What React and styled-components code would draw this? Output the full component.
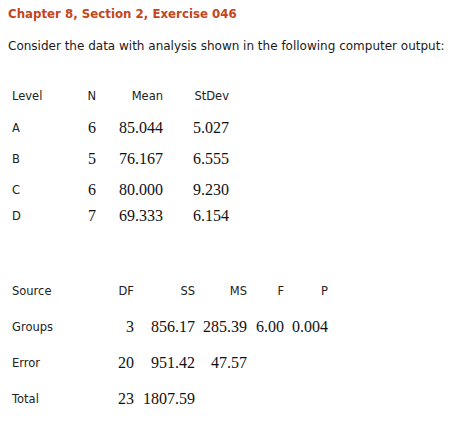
import React from "react";
import styled, { createGlobalStyle } from "styled-components";

const Global = createGlobalStyle`
  html, body { background: #ffffff; }
  body {
    margin: 8px;
    font-family: Verdana, "DejaVu Sans", sans-serif;
    font-size: 12px;
    color: #222;
  }
`;

const Page = styled.div`
  display: flex;
  flex-direction: column;
`;

const Title = styled.h2`
  margin: 0;
  font-size: 11.8px;
  line-height: 13px;
  font-weight: bold;
  color: #c4461c;
`;

const Intro = styled.p`
  margin: 17px 0 0;
  font-size: 12px;
  line-height: 16px;
  color: #1a1a1a;
`;

const Table = styled.div`
  display: grid;
  grid-template-columns: ${(p) => p.$cols};
  padding-left: 4px;
  margin-top: ${(p) => p.$top}px;
`;

const Row = styled.div`
  display: contents;
`;

const Cell = styled.div`
  height: ${(p) => p.$h}px;
  display: flex;
  align-items: center;
  justify-content: ${(p) => (p.$left ? "flex-start" : "flex-end")};
  white-space: nowrap;
  font-family: ${(p) =>
    p.$num ? '"Liberation Serif", "Times New Roman", serif' : 'Verdana, "DejaVu Sans", sans-serif'};
  font-size: ${(p) => (p.$num ? "16px" : "11.5px")};
  color: ${(p) => (p.$num ? "#111" : "#222")};
`;

const levels = {
  cols: "60px 24px 67px 66px",
  header: ["Level", "N", "Mean", "StDev"],
  heights: [32, 32, 30, 32, 20],
  rows: [
    ["A", "6", "85.044", "5.027"],
    ["B", "5", "76.167", "6.555"],
    ["C", "6", "80.000", "9.230"],
    ["D", "7", "69.333", "6.154"],
  ],
};

const anova = {
  cols: "60px 62px 61px 52px 37px 44px",
  header: ["Source", "DF", "SS", "MS", "F", "P"],
  heights: [36, 36, 36, 36],
  rows: [
    ["Groups", "3", "856.17", "285.39", "6.00", "0.004"],
    ["Error", "20", "951.42", "47.57", "", ""],
    ["Total", "23", "1807.59", "", "", ""],
  ],
};

function DataTable({ data, top }) {
  return (
    <Table $cols={data.cols} $top={top}>
      <Row>
        {data.header.map((h, i) => (
          <Cell key={i} $h={data.heights[0]} $left={i === 0}>
            {h}
          </Cell>
        ))}
      </Row>
      {data.rows.map((r, ri) => (
        <Row key={ri}>
          {r.map((v, i) => (
            <Cell key={i} $h={data.heights[ri + 1]} $left={i === 0} $num={i > 0}>
              {v}
            </Cell>
          ))}
        </Row>
      ))}
    </Table>
  );
}

export default function App() {
  return (
    <Page>
      <Global />
      <Title>Chapter 8, Section 2, Exercise 046</Title>
      <Intro>Consider the data with analysis shown in the following computer output:</Intro>
      <DataTable data={levels} top={26} />
      <DataTable data={anova} top={47} />
    </Page>
  );
}
